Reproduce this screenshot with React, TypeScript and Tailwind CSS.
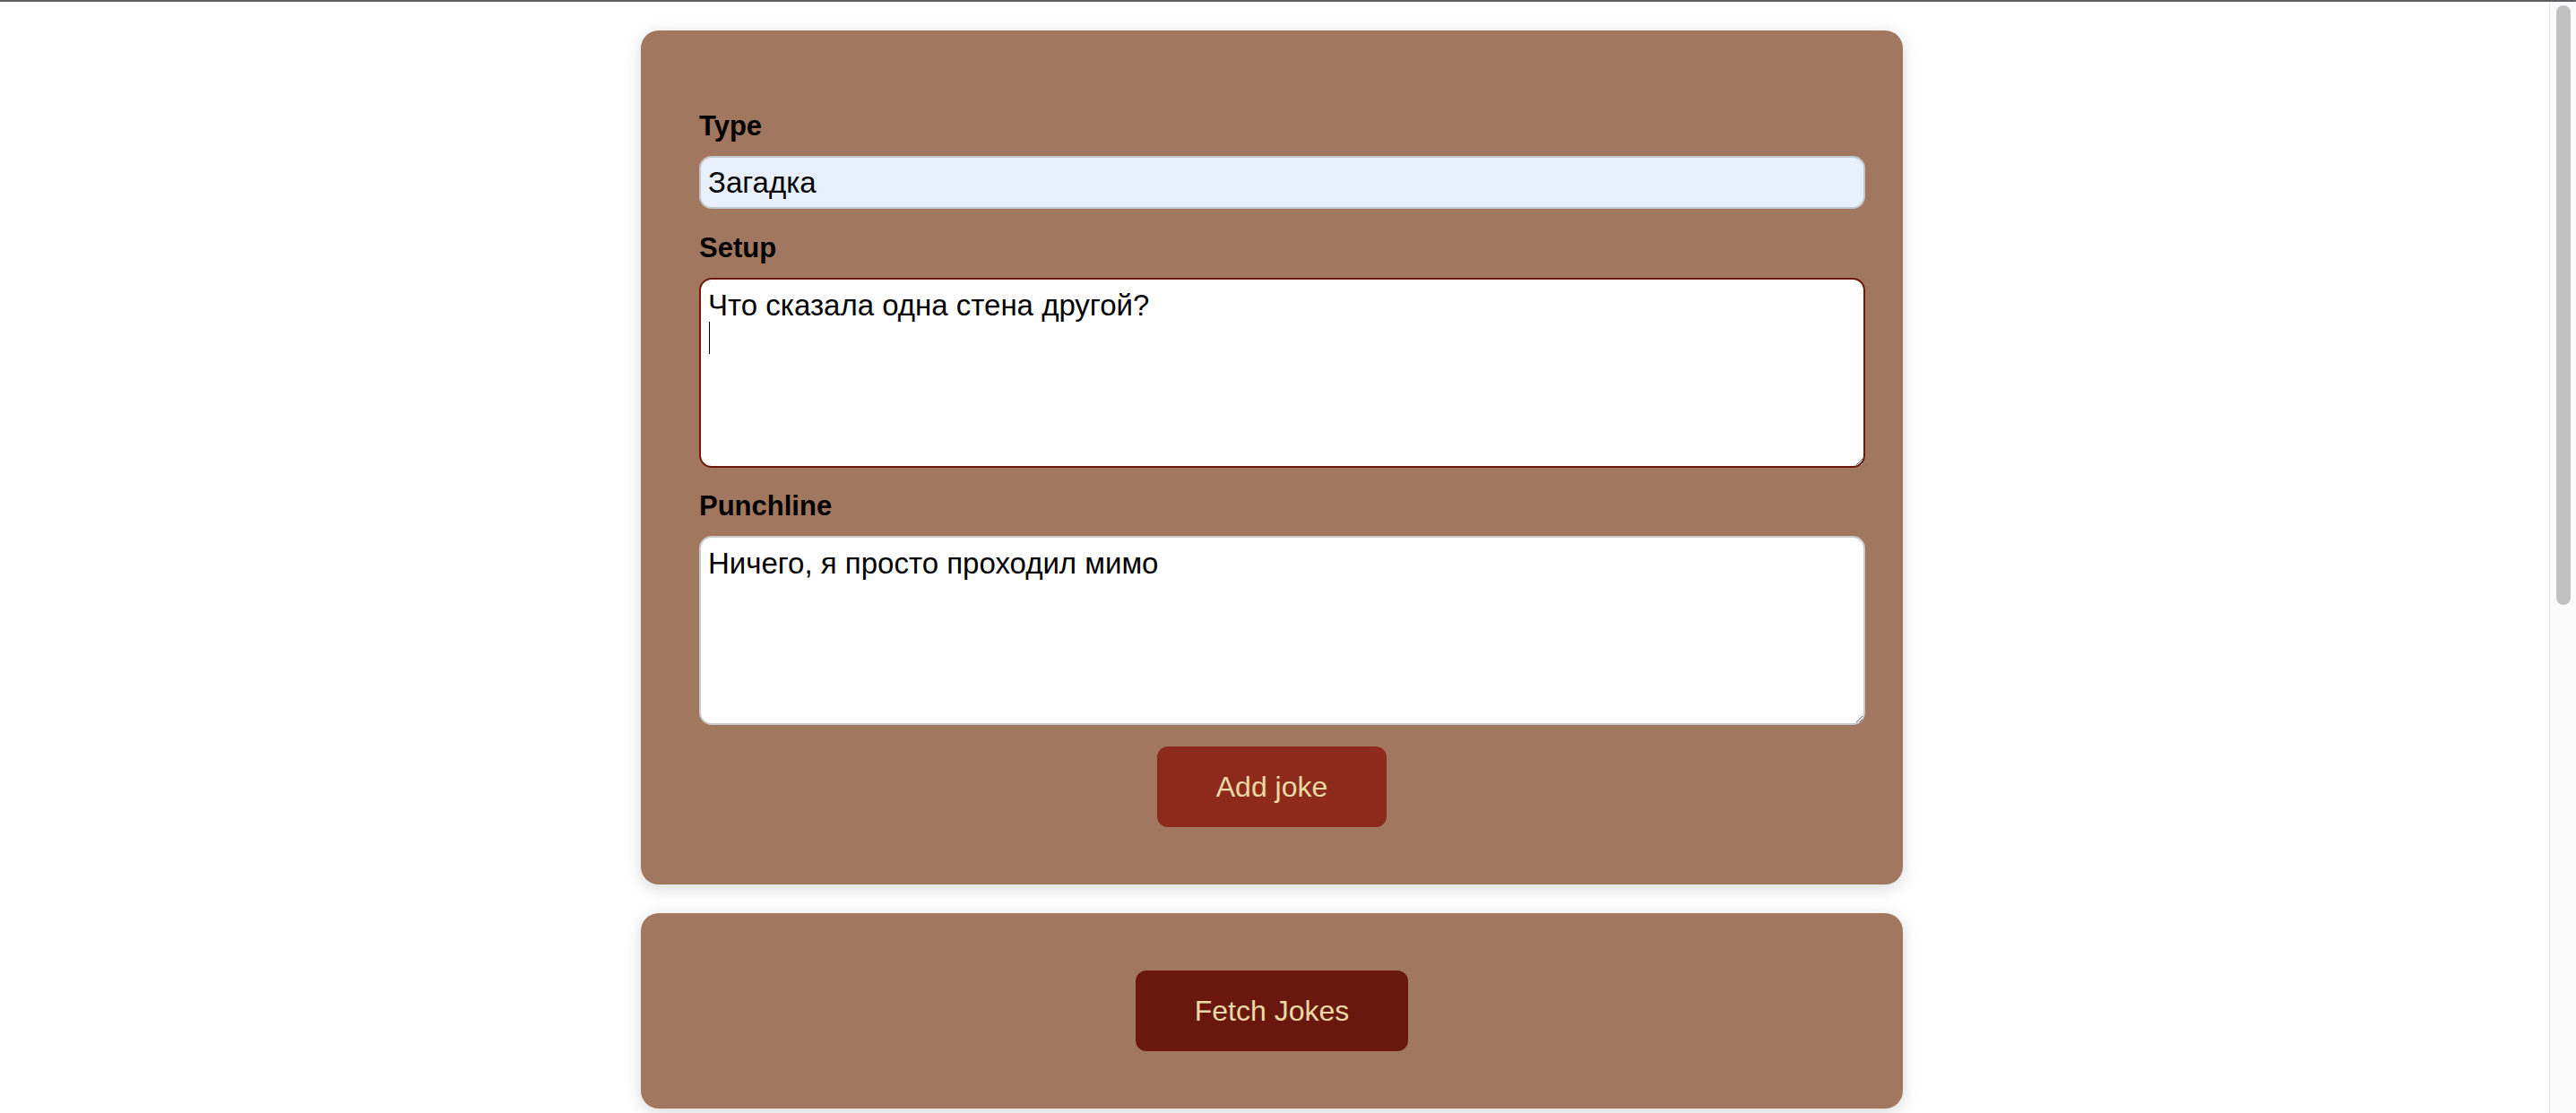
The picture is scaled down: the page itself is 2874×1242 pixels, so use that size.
import { useState } from "react"

const font = { fontFamily: '"Liberation Sans", Arial, sans-serif' }

function Label({ children }: { children: string }) {
  return (
    <label className="block text-[31px] leading-[36px] font-bold text-black mb-[15px]">
      {children}
    </label>
  )
}

export default function App() {
  const [type, setType] = useState("Загадка")
  const [setup, setSetup] = useState("Что сказала одна стена другой?\n")
  const [punchline, setPunchline] = useState("Ничего, я просто проходил мимо")

  return (
    <div className="h-screen w-full overflow-hidden flex flex-col bg-white" style={font}>
      <div className="h-[2px] w-full bg-[#5f5f63]" />
      <div className="flex flex-1 min-h-0">
        <main className="flex-1 pt-[32px]">
          <form
            className="ml-[715px] w-[1408px] rounded-[20px] bg-[#a1785f] pl-[65px] pt-[89px] pb-[64px] shadow-[0_4px_18px_rgba(0,0,0,0.16)]"
            onSubmit={(e) => e.preventDefault()}
          >
            <Label>Type</Label>
            <input
              value={type}
              onChange={(e) => setType(e.target.value)}
              className="block w-[1301px] h-[59px] rounded-[14px] border-2 border-[#c3c6cb] bg-[#e8f0fe] px-[8px] text-[33px] text-black outline-none mb-[26px]"
            />
            <Label>Setup</Label>
            <div className="relative mb-[25px] w-[1301px]">
              <textarea
                value={setup}
                onChange={(e) => setSetup(e.target.value)}
                className="block w-full h-[212px] rounded-[14px] border-2 border-[#6b1a0e] bg-white px-[8px] py-[10px] text-[33px] leading-[37px] text-black outline-none"
              />
              <span className="absolute left-[11px] top-[49px] h-[36px] w-[1px] bg-black" />
            </div>
            <Label>Punchline</Label>
            <textarea
              value={punchline}
              onChange={(e) => setPunchline(e.target.value)}
              className="block w-[1301px] h-[211px] rounded-[14px] border-2 border-[#cacaca] bg-white px-[8px] py-[10px] text-[33px] leading-[37px] text-black outline-none mb-[24px]"
            />
            <div className="flex justify-center pr-[65px]">
              <button
                type="submit"
                className="h-[90px] px-[66px] rounded-[12px] bg-[#8e2a1c] text-[32px] text-[#e9d9a6]"
              >
                Add joke
              </button>
            </div>
          </form>

          <div className="ml-[715px] mt-[32px] w-[1408px] rounded-[20px] bg-[#a1785f] py-[64px] flex justify-center shadow-[0_4px_18px_rgba(0,0,0,0.16)]">
            <button className="h-[90px] px-[66px] rounded-[12px] bg-[#6a180e] text-[32px] text-[#e9d9a6]">
              Fetch Jokes
            </button>
          </div>
        </main>
        <div className="w-[30px] bg-[#fafafa] border-l border-[#e6e6e6] pl-[7px] pt-[4px]">
          <div className="w-[16px] h-[669px] rounded-full bg-[#c1c1c1]" />
        </div>
      </div>
    </div>
  )
}
